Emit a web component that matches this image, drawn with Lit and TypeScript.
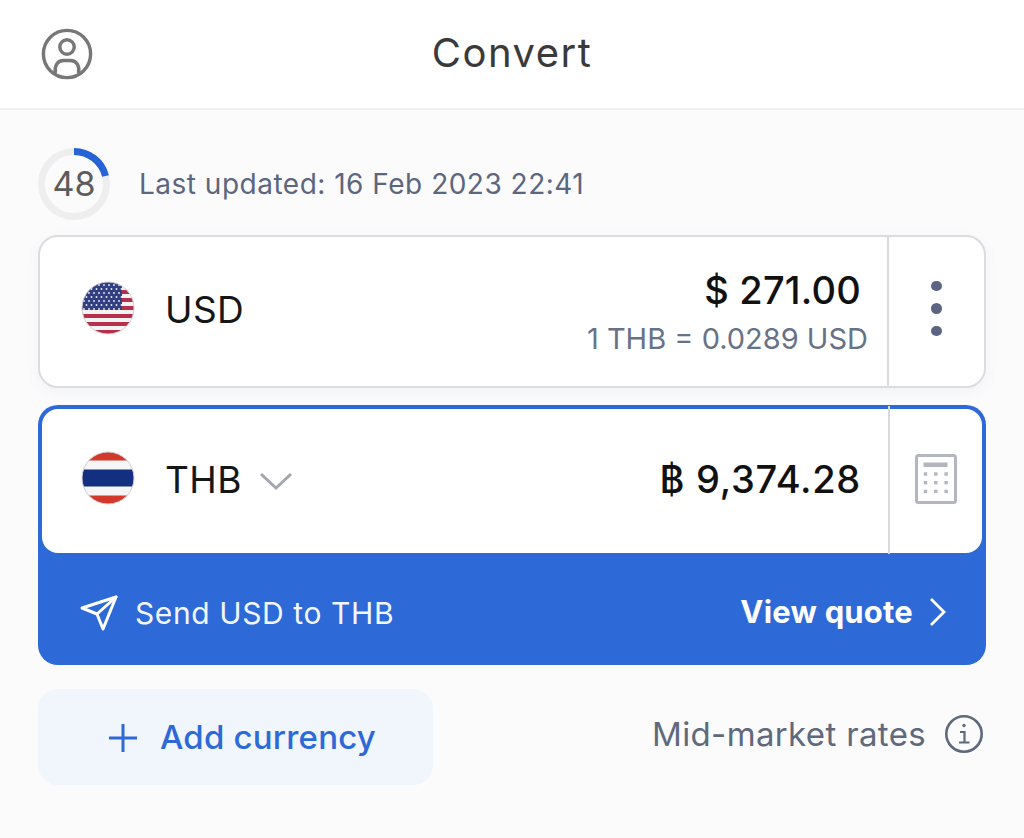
import { LitElement, html, css, svg } from "lit";
import { customElement } from "lit/decorators.js";

const usFlag = () => {
  const stripes = [];
  for (let i = 0; i < 13; i++) {
    stripes.push(svg`<rect x="0" y="${i * 4}" width="52" height="4" fill="${i % 2 ? "#f4f2f3" : "#b5304a"}"/>`);
  }
  const stars = [];
  for (let r = 0; r < 7; r++) {
    for (let c = 0; c < 8; c++) {
      stars.push(svg`<circle cx="${2 + c * 5 + (r % 2 ? 2.5 : 0)}" cy="${3 + r * 4}" r="0.9" fill="#eef0f8"/>`);
    }
  }
  return html`<svg class="flag" width="54" height="54" viewBox="-1 -1 54 54">
    <defs><clipPath id="us"><circle cx="26" cy="26" r="26"/></clipPath></defs>
    <g clip-path="url(#us)">${stripes}<rect width="40" height="28" fill="#323f80"/>${stars}</g>
    <circle cx="26" cy="26" r="26" fill="none" stroke="#cfcfd6" stroke-width="1"/>
  </svg>`;
};

const thFlag = () => html`<svg class="flag" width="54" height="54" viewBox="-1 -1 54 54">
  <defs><clipPath id="th"><circle cx="26" cy="26" r="26"/></clipPath></defs>
  <g clip-path="url(#th)">
    <rect width="52" height="52" fill="#f6f5f6"/>
    <rect width="52" height="8.500" fill="#d2392b"/>
    <rect y="43.500" width="52" height="8.500" fill="#d2392b"/>
    <rect y="17.500" width="52" height="17" fill="#12307f"/>
  </g>
  <circle cx="26" cy="26" r="26" fill="none" stroke="#cfcfd6" stroke-width="1"/>
</svg>`;

const calcDots = () => {
  const d = [];
  for (let r = 0; r < 3; r++) for (let c = 0; c < 3; c++) {
    d.push(svg`<rect x="${8.8 + c * 10.3}" y="${18.3 + r * 8.7}" width="3.4" height="3.4" fill="#b3b6bf"/>`);
  }
  return d;
};

@customElement("app-root")
export class AppRoot extends LitElement {
  static styles = css`
    :host {
      display: block;
      width: 1024px;
      height: 838px;
      overflow: hidden;
      background: #fbfbfc;
      font-family: Inter, "Liberation Sans", sans-serif;
    }
    svg { display: block; flex: none; }
    .header {
      height: 108px;
      background: #fff;
      border-bottom: 2px solid #f0f0f1;
      display: grid;
      grid-template-columns: 1fr auto 1fr;
      align-items: center;
      padding: 0 41px;
    }
    .title { font-size: 40px; color: #3a3a3a; line-height: 1; letter-spacing: 1.5px; margin-bottom: 2px; }
    .main { display: flex; flex-direction: column; padding: 38px 38px 0; }
    .updated { display: flex; align-items: center; gap: 29px; height: 72px; }
    .ring { display: grid; width: 72px; height: 72px; place-items: center; }
    .ring > * { grid-area: 1 / 1; }
    .ring span { font-size: 34px; color: #5c5c5c; line-height: 1; }
    .updated-text { font-size: 28px; color: #5b6680; line-height: 1; letter-spacing: 0.5px; }
    .card {
      margin-top: 15px;
      height: 153px;
      box-sizing: border-box;
      background: #fff;
      border: 2px solid #dcdcdf;
      border-radius: 20px;
      display: flex;
      box-shadow: 0 4px 14px rgba(90, 100, 130, 0.06);
    }
    .row { flex: 1; display: flex; align-items: center; padding-left: 41px; padding-bottom: 7px; min-width: 0; }
    .code { font-size: 37px; color: #161616; margin-left: 30px; line-height: 1; letter-spacing: 0.4px; }
    .usd .code { margin-top: 2px; }
    .amounts { margin-left: auto; display: flex; flex-direction: column; align-items: flex-end; }
    .usd .amounts { margin-top: 16px; }
    .amount { font-size: 38px; color: #111; line-height: 46px; font-weight: 500; letter-spacing: 0.2px; }
    .usd .amount { margin-right: 26px; }
    .rate { font-size: 29px; color: #687286; line-height: 52px; margin-right: 19px; }
    .side {
      width: 97px;
      flex: none;
      border-left: 2px solid #d9d9dc;
      display: flex;
      align-items: center;
      justify-content: center;
      padding-bottom: 6px;
      box-sizing: border-box;
    }
    .dots { display: flex; flex-direction: column; gap: 12px; }
    .dots i { width: 11px; height: 10.500px; border-radius: 50%; background: #5b6480; display: block; }
    .active {
      margin-top: 17px;
      height: 260px;
      background: #2e69d8;
      border-radius: 20px;
      padding: 4px 4px 0;
      box-sizing: border-box;
      display: flex;
      flex-direction: column;
    }
    .active-top {
      height: 144px;
      background: #fff;
      border-radius: 16px;
      display: flex;
    }
    .active-top .row { padding-left: 39px; padding-bottom: 4px; }
    .active-top .flag { margin-top: -2px; }
    .active-top .amount { margin-right: 27px; letter-spacing: 0.7px; }
    .active-top .side { width: 94px; margin: -3px 0 -1px; padding-bottom: 2px; }
    .chev { margin-left: 17px; margin-top: 4px; }
    .send {
      flex: 1;
      display: flex;
      align-items: center;
      color: #fff;
      padding: 8px 35px 0 38px;
    }
    .send-label { font-size: 30px; margin-left: 17px; color: #f2f6fe; line-height: 1; letter-spacing: 0.6px; }
    .view { margin-left: auto; font-size: 31px; font-weight: 700; line-height: 1; letter-spacing: 0.2px; margin-top: -3px; }
    .view-chev { margin-left: 16px; margin-top: -3px; }
    .bottom { display: flex; align-items: center; margin-top: 24px; }
    .add {
      width: 395px;
      height: 96px;
      background: #f1f5fc;
      border-radius: 20px;
      display: flex;
      align-items: center;
      padding-left: 71px;
      box-sizing: border-box;
      color: #2e69d8;
    }
    .add svg { margin-top: 1px; }
    .add span { font-size: 33px; font-weight: 500; margin-left: 23px; line-height: 1; letter-spacing: 0.2px; }
    .mid { margin-left: auto; display: flex; align-items: center; margin-bottom: 6px; margin-right: 3px; }
    .mid span { font-size: 33px; color: #5f697c; line-height: 1; letter-spacing: 0.35px; }
    .mid svg { margin-left: 19px; }
  `;

  render() {
    return html`
      <div class="header">
        <svg width="52" height="52" viewBox="0 0 52 52" fill="none" stroke="#777" stroke-width="3.4">
          <circle cx="26" cy="26" r="23.6"/>
          <circle cx="26" cy="19" r="7.200"/>
          <path d="M14.500 45c-1.500-7 2-12.500 8-12.500h7c6 0 9.500 5.500 8 12.500"/>
        </svg>
        <div class="title">Convert</div>
        <div></div>
      </div>
      <div class="main">
        <div class="updated">
          <div class="ring">
            <svg width="72" height="72" viewBox="0 0 72 72" fill="none" stroke-width="7">
              <circle cx="36" cy="36" r="32.5" stroke="#eeeeef"/>
              <path d="M36 3.500A32.500 32.500 0 0 1 67.500 28" stroke="#2563d6"/>
            </svg>
            <span>48</span>
          </div>
          <div class="updated-text">Last updated: 16 Feb 2023 22:41</div>
        </div>

        <div class="card usd">
          <div class="row">
            ${usFlag()}
            <div class="code">USD</div>
            <div class="amounts">
              <div class="amount">$ 271.00</div>
              <div class="rate">1 THB = 0.0289 USD</div>
            </div>
          </div>
          <div class="side">
            <div class="dots"><i></i><i></i><i></i></div>
          </div>
        </div>

        <div class="active">
          <div class="active-top">
            <div class="row">
              ${thFlag()}
              <div class="code">THB</div>
              <svg class="chev" width="34" height="20" viewBox="0 0 34 20" fill="none" stroke="#a3a7ae" stroke-width="3">
                <path d="M2 3l15 14L32 3"/>
              </svg>
              <div class="amounts">
                <div class="amount">฿ 9,374.28</div>
              </div>
            </div>
            <div class="side">
              <svg width="42" height="50" viewBox="0 0 42 50" fill="none">
                <rect x="1.500" y="1.500" width="39" height="47" rx="2" stroke="#b3b6bf" stroke-width="3"/>
                <rect x="8.500" y="8.500" width="24" height="4.500" fill="#b3b6bf"/>
                ${calcDots()}
              </svg>
            </div>
          </div>
          <div class="send">
            <svg width="38" height="36" viewBox="0 0 38 36" fill="none" stroke="#fff" stroke-width="3" stroke-linejoin="round" stroke-linecap="round">
              <path d="M36 2L2 13l15 6 6 15z"/>
              <path d="M17 19L36 2"/>
            </svg>
            <span class="send-label">Send USD to THB</span>
            <span class="view">View quote</span>
            <svg class="view-chev" width="18" height="30" viewBox="0 0 18 30" fill="none" stroke="#fff" stroke-width="2.800">
              <path d="M2 2l13 13L2 28"/>
            </svg>
          </div>
        </div>

        <div class="bottom">
          <div class="add">
            <svg width="28" height="28" viewBox="0 0 28 28" fill="none" stroke="#2e69d8" stroke-width="3">
              <path d="M14 0v28M0 14h28"/>
            </svg>
            <span>Add currency</span>
          </div>
          <div class="mid">
            <span>Mid-market rates</span>
            <svg width="38" height="38" viewBox="0 0 38 38" fill="none" stroke="#5f697c" stroke-width="2.600">
              <circle cx="19" cy="19" r="17.700"/>
              <path d="M15 17h4.500v10M14 27.500h10.500" stroke-width="2.200"/>
              <circle cx="19" cy="10.500" r="1.700" fill="#5f697c" stroke="none"/>
            </svg>
          </div>
        </div>
      </div>
    `;
  }
}
